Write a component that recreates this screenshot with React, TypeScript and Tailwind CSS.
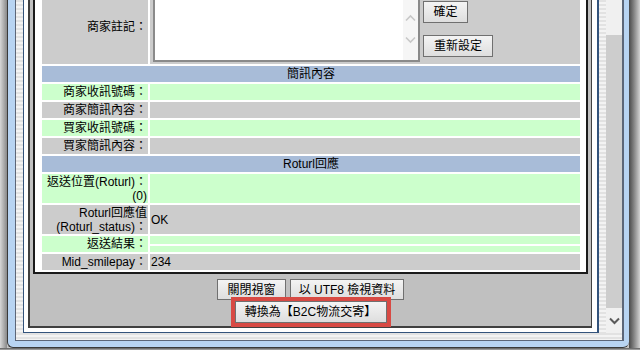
import React from "react";

const stripesV =
  "bg-[repeating-linear-gradient(to_bottom,#e2e2e2_0px,#e2e2e2_2px,#f3f3f3_2px,#f3f3f3_4px)]";

function Btn({ className, children }: { className: string; children: React.ReactNode }) {
  return (
    <div
      className={
        "flex items-center justify-center border border-[#707070] bg-gradient-to-b from-[#f4f4f4] to-[#dedede] text-[12px] leading-[14px] text-black whitespace-nowrap " +
        className
      }
    >
      {children}
    </div>
  );
}

function Row({
  label,
  value,
  bg,
  h,
}: {
  label: React.ReactNode;
  value?: React.ReactNode;
  bg: string;
  h: string;
}) {
  return (
    <div className={"flex gap-[2px] " + h}>
      <div className={"w-[106px] flex items-center justify-end text-right pr-[1px] leading-[14px] " + bg}>
        <div>{label}</div>
      </div>
      <div className={"flex-1 flex items-center pl-[1px] " + bg}>{value}</div>
    </div>
  );
}

function Header({ children }: { children: React.ReactNode }) {
  return (
    <div className="h-[16px] bg-[#a8bcd8] flex items-center justify-center leading-[14px]">{children}</div>
  );
}

export default function App() {
  return (
    <div className="relative w-[640px] h-[350px] overflow-hidden flex flex-col bg-[#c4c4c4] font-['Liberation_Sans','Noto_Sans_CJK_TC',sans-serif] text-[12px] text-black">
      <div className="flex h-[348px]">
        <div className="w-[7px] bg-gradient-to-r from-[#d8d8d8] to-[#8a8a8a]" />
        <div className="w-[622px] h-[348px] flex flex-col border-l border-b border-[#3a3a3a] bg-[#b8d4f2] rounded-bl-[6px] rounded-br-[6px] pl-[7px] pr-[5px] pb-[6px]">
          <div className="h-[341px] flex flex-col border-l border-r-2 border-b border-[#5c6678]">
            <div className="h-[333px] flex">
              <div className={"w-[7px] " + stripesV} />
              {/* page content */}
              <div className="w-[576px] h-[333px] bg-white border-l border-r-2 border-b border-[#33537c] pl-[4px] pr-[5px] pb-[4px] flex flex-col">
                {/* gray body */}
                <div className="h-[328px] bg-[#c0c0c0] border-l-2 border-r border-b-2 border-[#404040] px-[3px] flex flex-col">
                  {/* table */}
                  <div className="h-[274px] bg-white border-l-2 border-r-2 border-b-2 border-[#1a1a1a] pl-[7px] pr-[6px] pb-[2px] flex flex-col gap-[2px]">
                    {/* 商家註記 */}
                    <div className="flex gap-[2px] h-[64px]">
                      <div className="w-[106px] bg-[#cccccc] flex justify-end pr-[1px] pt-[20px] leading-[14px]">
                        商家註記：
                      </div>
                      <div className="flex-1 bg-[#cccccc] flex pl-[3px]">
                        <div className="w-[267px] h-[62px] border-l-2 border-r-2 border-b-2 border-[#8a8a8a] bg-white flex">
                          <div className="flex-1" />
                          <div className="w-[15px] bg-[#f6f6f6] relative">
                            <svg
                              className="absolute left-[2px] top-[14px]"
                              width="11"
                              height="8"
                              viewBox="0 0 11 8"
                            >
                              <path d="M1 6.5 L5.5 2 L10 6.5" fill="none" stroke="#c8c8c8" strokeWidth="1.6" />
                            </svg>
                            <svg
                              className="absolute left-[2px] top-[36px]"
                              width="11"
                              height="8"
                              viewBox="0 0 11 8"
                            >
                              <path d="M1 1.5 L5.5 6 L10 1.5" fill="none" stroke="#c8c8c8" strokeWidth="1.6" />
                            </svg>
                          </div>
                        </div>
                        <div className="ml-[3px] flex flex-col gap-[12px] pt-[1px]">
                          <Btn className="w-[45px] h-[22px]">確定</Btn>
                          <Btn className="w-[70px] h-[22px]">重新設定</Btn>
                        </div>
                      </div>
                    </div>
                    <Header>簡訊內容</Header>
                    <Row h="h-[16px]" bg="bg-[#ccffcc]" label="商家收訊號碼：" />
                    <Row h="h-[16px]" bg="bg-[#cccccc]" label="商家簡訊內容：" />
                    <Row h="h-[16px]" bg="bg-[#ccffcc]" label="買家收訊號碼：" />
                    <Row h="h-[16px]" bg="bg-[#cccccc]" label="買家簡訊內容：" />
                    <Header>Roturl回應</Header>
                    <Row
                      h="h-[29px]"
                      bg="bg-[#ccffcc]"
                      label={
                        <>
                          返送位置(Roturl)：
                          <br />
                          (0)
                        </>
                      }
                    />
                    <Row
                      h="h-[29px]"
                      bg="bg-[#cccccc]"
                      label={
                        <>
                          Roturl回應值
                          <br />
                          (Roturl_status)：
                        </>
                      }
                      value="OK"
                    />
                    <div className="flex gap-[2px] h-[16px]">
                      <div className="w-[106px] bg-[#ccffcc] flex items-center justify-end pr-[1px] leading-[14px]">
                        返送結果：
                      </div>
                      <div className="flex-1 flex flex-col">
                        <div className="h-[8px] bg-[#ccffcc]" />
                        <div className="h-[2px] bg-white" />
                        <div className="flex-1 bg-[#ccffcc]" />
                      </div>
                    </div>
                    <Row h="h-[16px]" bg="bg-[#cccccc]" label="Mid_smilepay：" value="234" />
                  </div>
                  {/* buttons */}
                  <div className="pt-[5px] flex flex-col gap-[1px]">
                    <div className="flex justify-center gap-[4px]">
                      <Btn className="w-[69px] h-[21px]">關閉視窗</Btn>
                      <Btn className="w-[114px] h-[21px]">以 UTF8 檢視資料</Btn>
                    </div>
                    <div className="flex justify-center">
                      <div className="relative">
                        <Btn className="w-[152px] h-[22px]">轉換為【B2C物流交寄】</Btn>
                        <div className="absolute -inset-[4px] border-4 border-[#d84a44]" />
                      </div>
                    </div>
                  </div>
                </div>
              </div>
              <div className={"w-[7px] " + stripesV} />
              {/* window scrollbar */}
              <div className="w-[16px] bg-[#f0f0f0] flex flex-col">
                <div className="h-[35px]" />
                <div className="h-[273px] bg-[#cdcdcd]" />
                <div className="flex-1 flex items-center justify-center">
                  <svg width="11" height="8" viewBox="0 0 11 8">
                    <path d="M1 1.5 L5.5 6 L10 1.5" fill="none" stroke="#5a5a5a" strokeWidth="2" />
                  </svg>
                </div>
              </div>
            </div>
            <div className={"h-[7px] " + stripesV} />
          </div>
        </div>
        <div className="w-[11px] bg-gradient-to-r from-[#4a4a4a] to-[#d2d2d2]" />
      </div>
      <div className="h-[2px] bg-gradient-to-b from-[#5a5a5a] to-[#b0b0b0]" />
    </div>
  );
}
